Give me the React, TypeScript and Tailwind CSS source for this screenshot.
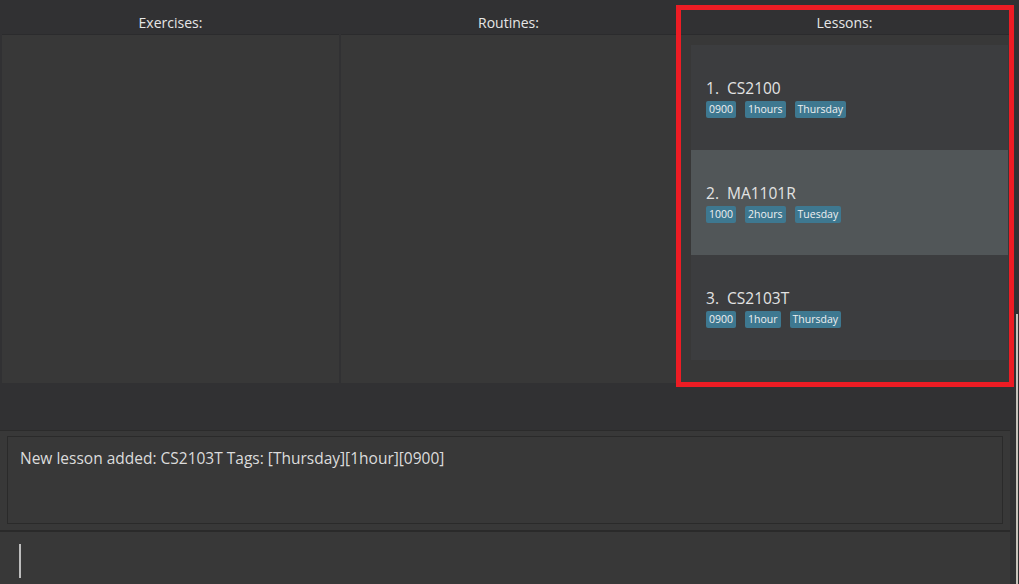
import React from 'react';

type Lesson = { code: string; tags: string[] };

const LESSONS: Lesson[] = [
  { code: 'CS2100', tags: ['0900', '1hours', 'Thursday'] },
  { code: 'MA1101R', tags: ['1000', '2hours', 'Tuesday'] },
  { code: 'CS2103T', tags: ['0900', '1hour', 'Thursday'] },
];

const SELECTED = 1;

const Column: React.FC<{ title: string; width: string; children?: React.ReactNode }> = ({ title, width, children }) => (
  <div className={`flex flex-col ${width}`}>
    <div className="h-[35px] flex items-end justify-center pb-[1px] border-b border-[#2b2b2d] text-[14px] font-medium text-[#e6e6e6]">
      {title}
    </div>
    <div className="flex-1 bg-[#383838]">{children}</div>
  </div>
);

export default function App() {
  return (
    <div
      className="relative w-[1019px] h-[584px] overflow-hidden bg-[#313133] flex flex-col"
      style={{ fontFamily: '"Open Sans", "Noto Sans", sans-serif' }}
    >
      {/* Lists */}
      <div className="flex h-[383px] pl-[2px] gap-[2px]">
        <Column title="Exercises:" width="w-[337px]" />
        <Column title="Routines:" width="w-[335px]" />
        <Column title="Lessons:" width="w-[333px]">
          <div className="pt-[10px] pl-[13px] pr-[3px]">
            {LESSONS.map((l, i) => (
              <div
                key={l.code}
                className={`h-[105px] flex flex-col justify-center pl-[15px] ${i === SELECTED ? 'bg-[#515658]' : 'bg-[#3c3d3f]'}`}
              >
                <div className="text-[15.5px] leading-[20px] text-[#e3e3e3]">
                  {i + 1}.&nbsp;&nbsp;{l.code}
                </div>
                <div className="flex gap-[9px] mt-[3px]">
                  {l.tags.map((t) => (
                    <span key={t} className="h-[17px] px-[3px] rounded-[2px] bg-[#3e7890] text-[10.5px] leading-[17px] text-[#f0f0f0]">
                      {t}
                    </span>
                  ))}
                </div>
              </div>
            ))}
          </div>
        </Column>
      </div>

      <div className="h-[47px]" />

      {/* Result display */}
      <div className="w-[1010px] h-[100px] bg-[#383838] border-t border-[#2b2b2b] px-[7px] pt-[5px] pb-[6px]">
        <div className="h-full border border-[#2a2a2a] px-[12px] pt-[10px] text-[15.5px] text-[#dcdcdc]">
          New lesson added: CS2103T Tags: [Thursday][1hour][0900]
        </div>
      </div>

      {/* Command box */}
      <div className="w-[1010px] flex-1 bg-[#383838] border-t-2 border-[#2a2a2a] pl-[19px] pt-[12px]">
        <div className="w-[2px] h-[34px] bg-[#bdbdbd]" />
      </div>

      {/* right edge strip */}
      <div className="absolute right-[1px] top-[314px] w-[2px] h-[270px] bg-[#c8c4bc]" />

      {/* annotation highlight */}
      <div className="absolute left-[676px] top-[5px] w-[338px] h-[382px] border-[5px] border-[#ed1c24] pointer-events-none" />
    </div>
  );
}
